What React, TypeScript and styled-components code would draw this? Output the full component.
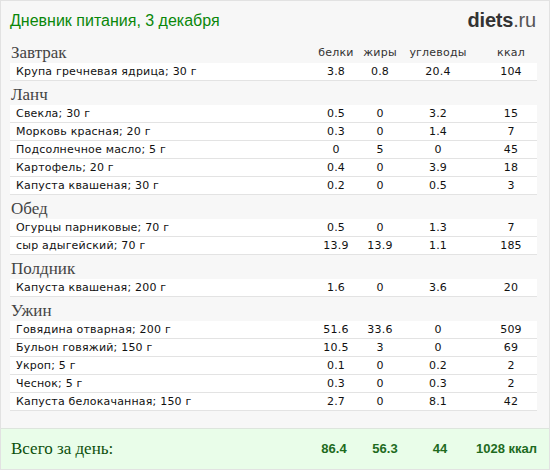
import React from 'react'
import styled, { createGlobalStyle } from 'styled-components'

const GlobalStyle = createGlobalStyle`
  html, body {
    margin: 0;
    padding: 0;
    background: #fff;
  }
`

const Diary = styled.div`
  width: 550px;
  height: 470px;
  box-sizing: border-box;
  border: 1px solid #e2e2e2;
  background: #f7f7f7;
  display: flex;
  flex-direction: column;
  font-family: 'DejaVu Sans', Verdana, sans-serif;
`

const Header = styled.div`
  height: 38px;
  padding: 0 13px 0 9px;
  display: flex;
  align-items: center;
  justify-content: space-between;
`

const Title = styled.h1`
  margin: 0;
  font: normal 16px/20px 'Liberation Sans', Arial, sans-serif;
  color: #0a870a;
  padding-top: 1px;
`

const Logo = styled.div`
  font: bold 20px/22px 'Liberation Sans', Arial, sans-serif;
  color: #333;
  letter-spacing: -0.2px;

  span {
    font-weight: normal;
    color: #555;
  }
`

const Meals = styled.div`
  padding: 0 12px 0 9px;
  flex: 1;
`

const cols = '1fr 44px 44px 72px 63px'

const MealHead = styled.div`
  display: grid;
  grid-template-columns: ${cols};
  height: 24px;
  box-sizing: border-box;
  padding-top: 3px;
`

const MealName = styled.div`
  font: normal 17px/21px 'Liberation Serif', 'Times New Roman', serif;
  color: #444;
  padding-left: 1px;
`

const ColLabel = styled.div<{ $kcal?: boolean }>`
  font-size: 11px;
  line-height: 21px;
  letter-spacing: 0.2px;
  color: #333;
  text-align: center;
  padding-left: ${({ $kcal }) => ($kcal ? '11px' : '0')};
`

const Row = styled.div`
  display: grid;
  grid-template-columns: ${cols};
  height: 18px;
  box-sizing: border-box;
  background: #fff;
  border-bottom: 1px solid #e3e3e3;
  font-size: 11px;
  line-height: 17px;
  letter-spacing: 0.2px;
  color: #111;
`

const Food = styled.div`
  padding-left: 6px;
  white-space: nowrap;
`

const Num = styled.div<{ $kcal?: boolean }>`
  text-align: center;
  padding-left: ${({ $kcal }) => ($kcal ? '11px' : '0')};
`

const Totals = styled.div`
  height: 41px;
  box-sizing: border-box;
  border-top: 1px solid #dde5dd;
  background: #e9fde9;
  display: grid;
  grid-template-columns: 1fr 46px 56px 54px 70px;
  align-items: center;
  padding: 0 12px 0 10px;
`

const TotalLabel = styled.div`
  font: normal 17px/20px 'Liberation Serif', 'Times New Roman', serif;
  color: #0c4f0c;
`

const TotalNum = styled.div<{ $right?: boolean }>`
  font: bold 13px/16px 'Liberation Sans', Arial, sans-serif;
  color: #1e6b1e;
  text-align: ${({ $right }) => ($right ? 'right' : 'center')};
`

type Item = [string, string, string, string, string]

const meals: { name: string; items: Item[] }[] = [
  { name: 'Завтрак', items: [['Крупа гречневая ядрица; 30 г', '3.8', '0.8', '20.4', '104']] },
  {
    name: 'Ланч',
    items: [
      ['Свекла; 30 г', '0.5', '0', '3.2', '15'],
      ['Морковь красная; 20 г', '0.3', '0', '1.4', '7'],
      ['Подсолнечное масло; 5 г', '0', '5', '0', '45'],
      ['Картофель; 20 г', '0.4', '0', '3.9', '18'],
      ['Капуста квашеная; 30 г', '0.2', '0', '0.5', '3'],
    ],
  },
  {
    name: 'Обед',
    items: [
      ['Огурцы парниковые; 70 г', '0.5', '0', '1.3', '7'],
      ['сыр адыгейский; 70 г', '13.9', '13.9', '1.1', '185'],
    ],
  },
  { name: 'Полдник', items: [['Капуста квашеная; 200 г', '1.6', '0', '3.6', '20']] },
  {
    name: 'Ужин',
    items: [
      ['Говядина отварная; 200 г', '51.6', '33.6', '0', '509'],
      ['Бульон говяжий; 150 г', '10.5', '3', '0', '69'],
      ['Укроп; 5 г', '0.1', '0', '0.2', '2'],
      ['Чеснок; 5 г', '0.3', '0', '0.3', '2'],
      ['Капуста белокачанная; 150 г', '2.7', '0', '8.1', '42'],
    ],
  },
]

export default function App() {
  return (
    <>
      <GlobalStyle />
      <Diary>
        <Header>
          <Title>Дневник питания, 3 декабря</Title>
          <Logo>
            diets<span>.ru</span>
          </Logo>
        </Header>

        <Meals>
          {meals.map((meal, i) => (
            <div key={meal.name}>
              <MealHead>
                <MealName>{meal.name}</MealName>
                {i === 0 && (
                  <>
                    <ColLabel>белки</ColLabel>
                    <ColLabel>жиры</ColLabel>
                    <ColLabel>углеводы</ColLabel>
                    <ColLabel $kcal>ккал</ColLabel>
                  </>
                )}
              </MealHead>
              {meal.items.map((it) => (
                <Row key={it[0]}>
                  <Food>{it[0]}</Food>
                  <Num>{it[1]}</Num>
                  <Num>{it[2]}</Num>
                  <Num>{it[3]}</Num>
                  <Num $kcal>{it[4]}</Num>
                </Row>
              ))}
            </div>
          ))}
        </Meals>

        <Totals>
          <TotalLabel>Всего за день:</TotalLabel>
          <TotalNum>86.4</TotalNum>
          <TotalNum>56.3</TotalNum>
          <TotalNum>44</TotalNum>
          <TotalNum $right>1028 ккал</TotalNum>
        </Totals>
      </Diary>
    </>
  )
}
